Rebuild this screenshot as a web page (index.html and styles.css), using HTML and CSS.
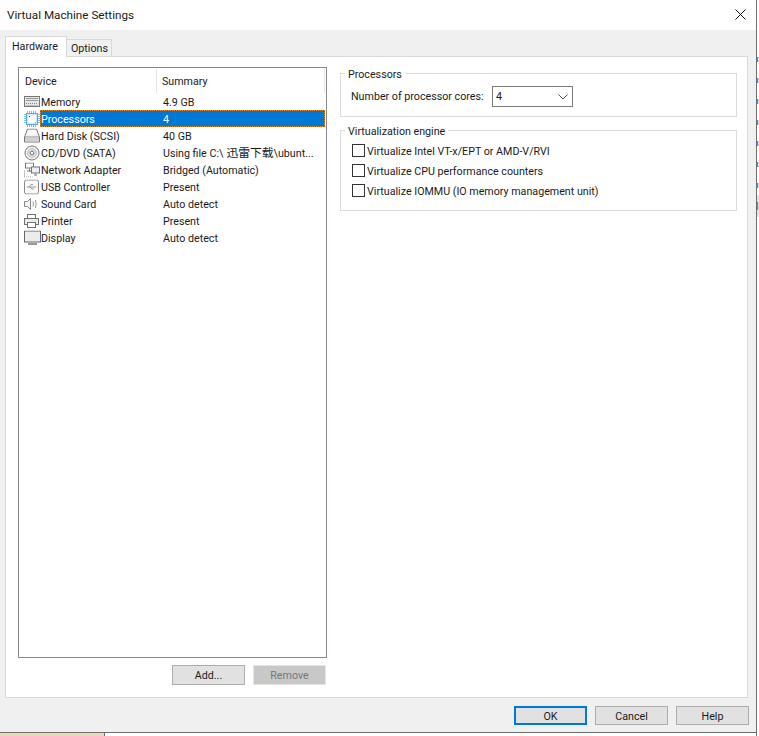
FILE: index.html
```html
<!DOCTYPE html>
<html lang="en">
<head>
<meta charset="utf-8">
<title>Virtual Machine Settings</title>
<link rel="stylesheet" href="styles.css">
</head>
<body>
<div class="window">
  <header class="titlebar">
    <span class="title">Virtual Machine Settings</span>
    <svg class="close" width="11" height="11" viewBox="0 0 11 11"><path d="M.5.500l10 10M10.500.500l-10 10" stroke="#111" fill="none"/></svg>
  </header>
  <main class="body">
    <div class="tabs">
      <div class="tab active">Hardware</div>
      <div class="tab">Options</div>
    </div>
    <section class="panel">
      <div class="left">
        <div class="list">
          <div class="head"><div class="hd hd1">Device</div><div class="hd hd2">Summary</div></div>
          <div class="row"><svg class="ico" width="16" height="12" viewBox="0 0 16 12"><rect x=".5" y=".5" width="15" height="10" fill="#e6e6e6" stroke="#777"/><path d="M2 2.500h12M2 4.500h12" stroke="#9a9a9a"/><path d="M2 7.500h12" stroke="#888" stroke-dasharray="1 1"/><path d="M2 9.500h12" stroke="#c4c4c4"/></svg><span class="name">Memory</span><span class="val">4.9 GB</span></div>
          <div class="row sel"><svg class="ico" width="16" height="16" viewBox="0 0 16 16"><path d="M3.500 0v16M5.500 0v16M7.500 0v16M9.500 0v16M11.500 0v16M0 3.500h16M0 5.500h16M0 7.500h16M0 9.500h16M0 11.500h16" stroke="#7fbdf0"/><rect x="2.500" y="2.500" width="11" height="11" fill="#cfe6f8" stroke="#5aa8e6"/><rect x="4" y="4" width="8" height="8" fill="#f6fbff"/><rect x="5" y="5" width="1" height="1" fill="#35506a"/><rect x="11" y="11" width="1" height="1" fill="#4a9fe0"/></svg><span class="name">Processors</span><span class="val">4</span></div>
          <div class="row"><svg class="ico" width="16" height="15" viewBox="0 0 16 15"><path d="M3.500 .5h9l3 8v5h-15v-5z" fill="#f7f7f7" stroke="#777"/><path d="M1 8.500h14" stroke="#888"/><rect x="1" y="9" width="14" height="4" fill="#d0d0d0"/></svg><span class="name">Hard Disk (SCSI)</span><span class="val">40 GB</span></div>
          <div class="row"><svg class="ico" width="16" height="16" viewBox="0 0 16 16"><circle cx="8" cy="8" r="7" fill="#f4f4f4" stroke="#777"/><circle cx="8" cy="8" r="4.500" fill="#dcdcdc" stroke="#c4c4c4"/><circle cx="8" cy="8" r="1.800" fill="#fff" stroke="#777"/></svg><span class="name">CD/DVD (SATA)</span><span class="val">Using file C:\<span class="cjk">迅雷下载</span>\ubunt...</span></div>
          <div class="row"><svg class="ico" width="16" height="15" viewBox="0 0 16 15"><rect x="1.500" y=".5" width="8" height="5" fill="#fff" stroke="#777"/><rect x="7.500" y="4.500" width="8" height="6" fill="#eee" stroke="#777"/><path d="M10 12.500h3M11.500 11v1" stroke="#777"/><path d="M.5 8v6.500h8" stroke="#888" stroke-dasharray="1 1" fill="none"/><path d="M5.500 6v3M3 8.500h4" stroke="#777"/></svg><span class="name">Network Adapter</span><span class="val">Bridged (Automatic)</span></div>
          <div class="row"><svg class="ico" width="15" height="15" viewBox="0 0 15 15"><rect x=".5" y=".5" width="14" height="14" rx="2" fill="#fafafa" stroke="#8a8a8a"/><path d="M3 7.500h9M5 7.500l2-2.500h2M6 7.500l2 2h2" stroke="#9a9a9a" fill="none"/></svg><span class="name">USB Controller</span><span class="val">Present</span></div>
          <div class="row"><svg class="ico" width="14" height="12" viewBox="0 0 14 12"><path d="M.5 3.500h3l3-3v11l-3-3h-3z" fill="#f4f4f4" stroke="#888"/><path d="M9 3.500q1 2.500 0 5M11.500 2q1.200 4 0 8" stroke="#999" fill="none"/></svg><span class="name">Sound Card</span><span class="val">Auto detect</span></div>
          <div class="row"><svg class="ico" width="15" height="14" viewBox="0 0 15 14"><rect x="3.500" y=".5" width="8" height="4" fill="#fff" stroke="#707070"/><rect x=".5" y="4.500" width="14" height="6" fill="#ececec" stroke="#707070"/><rect x="3.500" y="8.500" width="8" height="5" fill="#fff" stroke="#707070"/></svg><span class="name">Printer</span><span class="val">Present</span></div>
          <div class="row"><svg class="ico" width="17" height="15" viewBox="0 0 17 15"><rect x=".5" y=".5" width="16" height="11" fill="#ececec" stroke="#666"/><path d="M4 13.500h9" stroke="#999" stroke-width="2"/></svg><span class="name">Display</span><span class="val">Auto detect</span></div>
        </div>
        <div class="list-actions">
          <button class="btn add" type="button">Add...</button>
          <button class="btn remove" type="button" disabled>Remove</button>
        </div>
      </div>
      <div class="right">
        <fieldset class="group g1">
          <legend>Processors</legend>
          <div class="cores">
            <span class="cores-label">Number of processor cores:</span>
            <div class="select"><span>4</span><svg width="10" height="6" viewBox="0 0 10 6"><path d="M.5.500l4.500 4.500 4.500-4.500" stroke="#555" fill="none"/></svg></div>
          </div>
        </fieldset>
        <fieldset class="group g2">
          <legend>Virtualization engine</legend>
          <label class="check"><span class="box"></span>Virtualize Intel VT-x/EPT or AMD-V/RVI</label>
          <label class="check"><span class="box"></span>Virtualize CPU performance counters</label>
          <label class="check"><span class="box"></span>Virtualize IOMMU (IO memory management unit)</label>
        </fieldset>
      </div>
    </section>
    <footer class="footer">
      <button class="btn def" type="button">OK</button>
      <button class="btn plain" type="button">Cancel</button>
      <button class="btn plain" type="button">Help</button>
    </footer>
  </main>
  <div class="strip"><div class="tan"></div></div>
</div>
</body>
</html>
```
FILE: styles.css
```css
* { box-sizing: border-box; }
html, body { margin: 0; padding: 0; }
body {
  width: 759px;
  height: 736px;
  overflow: hidden;
  background-color: #fff;
  background-repeat: no-repeat;
  background-image:
    linear-gradient(#8a6f96, #8a6f96),
    linear-gradient(#e2e2e2, #e2e2e2),
    repeating-linear-gradient(to bottom, #8a7a9a 0 5px, transparent 5px 21px),
    repeating-linear-gradient(to bottom, #c9dcfa 0 5px, transparent 5px 21px);
  background-size: 1px 8px, 2px 22px, 1px 147px, 1px 147px;
  background-position: 757px 202px, 757px 195px, 757px 57px, 758px 57px;
  font-family: Roboto, "Noto Sans CJK SC", sans-serif;
  font-size: 10.7px;
  color: #1a1a1a;
}
.window { width: 757px; height: 736px; border-right: 1px solid #6e6e6e; display: flex; flex-direction: column; background: #fff; }
.titlebar { height: 30px; flex: none; display: flex; align-items: center; justify-content: space-between; padding: 0 10px 1px 7px; background: #fff; }
.title { font-size: 11.7px; }
.body { flex: 1; background: #f0f0f0; padding: 6px 8px 0 5px; display: flex; flex-direction: column; }
.tabs { display: flex; align-items: flex-end; height: 21px; flex: none; margin-bottom: -1px; position: relative; z-index: 1; }
.tab { height: 18px; width: 45px; padding: 0 4px; display: flex; align-items: center; background: #f0f0f0; border: 1px solid #d9d9d9; border-left: 0; }
.tab.active { height: 21px; width: 62px; background: #fff; border-left: 1px solid #d9d9d9; border-bottom: 0; padding: 0 0 1px 6px; }
.panel { height: 642px; flex: none; background: #fff; border: 1px solid #d9d9d9; padding: 10px 10px 0 12px; display: flex; gap: 13px; }
.left { width: 309px; flex: none; display: flex; flex-direction: column; }
.list { height: 591px; border: 1px solid #828790; background: #fff; padding: 1px; }
.head { height: 24px; display: flex; }
.hd { display: flex; align-items: center; padding-left: 5px; }
.hd1 { width: 137px; border-right: 1px solid #e5e5e5; }
.hd2 { flex: 1; padding-left: 5px; border-right: 1px solid #e5e5e5; }
.row { height: 17px; display: flex; align-items: center; position: relative; padding-left: 21px; }
.ico { position: absolute; left: 4px; top: 50%; transform: translateY(-50%); }
.name { width: 122px; flex: none; white-space: nowrap; line-height: 15px; padding-top: 2px; }
.val { white-space: nowrap; line-height: 15px; padding-top: 2px; }
.cjk { font-size: 11.8px; line-height: 11px; margin-left: 3px; }
.sel { color: #fff; }
.sel::before { content: ""; position: absolute; left: 20px; right: 0; top: 0; bottom: 0; background: #0078d7; outline: 1px dotted #e08a2c; outline-offset: -1px; }
.sel .name, .sel .val { position: relative; }
.list-actions { display: flex; justify-content: flex-end; gap: 8px; margin-top: 7px; padding-right: 1px; }
.btn { width: 73px; height: 20px; padding: 0; font: inherit; color: inherit; background: #e1e1e1; border: 1px solid #adadad; }
.remove { background: #c8c8c8; border-color: #e4e4e4; color: #777; }
.right { width: 397px; flex: none; }
.group { margin: 0; padding: 0; border: 1px solid #dcdcdc; min-width: 0; }
.group legend { padding: 0 3px; margin-left: 4px; line-height: 13px; position: relative; top: 1px; }
.g1 { height: 50px; }
.g2 { height: 87px; margin-top: 7px; }
.cores { display: flex; align-items: center; padding: 6px 0 0 10px; }
.cores-label { width: 141px; flex: none; }
.select { width: 81px; height: 21px; border: 1px solid #7a7a7a; background: #fff; display: flex; align-items: center; justify-content: space-between; padding: 0 4px 0 3px; }
.check { display: flex; align-items: center; height: 20px; padding-left: 11px; }
.check:first-of-type { margin-top: 4px; }
.box { width: 13px; height: 13px; margin-top: -1px; border: 1px solid #333; background: #fff; margin-right: 2px; flex: none; }
.footer { flex: none; display: flex; justify-content: flex-end; gap: 8px; padding: 8px 0 0; margin-right: -1px; height: 34px; }
.footer .btn { width: 73px; height: 19px; padding-top: 1px; }
.def { border: 2px solid #0078d7; }
.strip { height: 4px; flex: none; border-top: 1px solid #6e6e6e; background: #fff; }
.tan { width: 105px; height: 100%; background: #e8d8bc; border-right: 1px solid #6e6e6e; }
```
